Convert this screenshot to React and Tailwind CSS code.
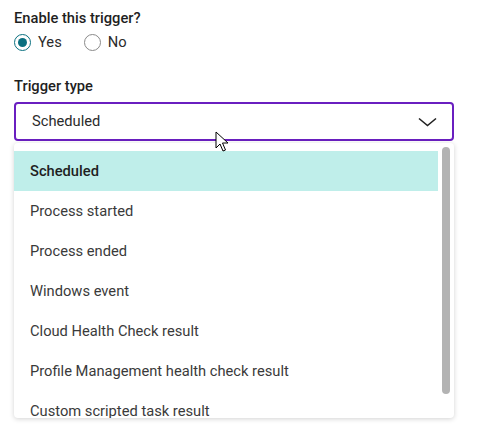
import { useState } from 'react'

const options = [
  'Scheduled',
  'Process started',
  'Process ended',
  'Windows event',
  'Cloud Health Check result',
  'Profile Management health check result',
  'Custom scripted task result',
]

function Radio({ checked, label }) {
  return (
    <label className="flex items-center gap-[7px]">
      <span
        className={
          checked
            ? 'w-[17px] h-[17px] rounded-full border-[1.5px] border-[#0a7080] flex items-center justify-center'
            : 'w-[17px] h-[17px] rounded-full border border-[#8a8a8a]'
        }
      >
        {checked && <span className="w-[9px] h-[9px] rounded-full bg-[#0a7080]" />}
      </span>
      <span className="text-[14.7px] text-[#2b2b2b]">{label}</span>
    </label>
  )
}

export default function App() {
  const [selected] = useState('Scheduled')

  return (
    <div
      className="relative w-[478px] h-[437px] bg-white overflow-hidden px-[14px] pt-[8px]"
      style={{ fontFamily: 'Roboto, "Liberation Sans", sans-serif' }}
    >
      <div className="text-[14.7px] leading-[20px] font-medium text-[#1f1f1f]">Enable this trigger?</div>
      <div className="flex items-center gap-[22px] mt-[5px] h-[18px]">
        <Radio checked label="Yes" />
        <Radio label="No" />
      </div>

      <div className="mt-[25px] text-[14.7px] leading-[20px] font-medium text-[#1f1f1f]">Trigger type</div>
      <div className="mt-[6px] w-[440px] h-[39px] border-2 border-[#6a1fc0] rounded-[4px] flex items-center justify-between pl-[16px] pr-[15px]">
        <span className="text-[14.7px] text-[#2b2b2b]">{selected}</span>
        <svg width="19" height="10" viewBox="0 0 19 10" fill="none">
          <path d="M1 1.5 L9.5 8.5 L18 1.5" stroke="#222" strokeWidth="1.6" />
        </svg>
      </div>

      <div className="mt-[2px] w-[440px] h-[275px] bg-white rounded-[4px] shadow-[0_1px_5px_rgba(0,0,0,0.18)] flex overflow-hidden">
        <ul className="flex-1 pt-[8px]">
          {options.map((o) => (
            <li
              key={o}
              className={
                o === selected
                  ? 'h-[40px] flex items-center pl-[16px] bg-[#bfeeea] text-[14.7px] font-medium text-[#1f1f1f]'
                  : 'h-[40px] flex items-center pl-[16px] text-[14.7px] text-[#3a3a3a]'
              }
            >
              {o}
            </li>
          ))}
        </ul>
        <div className="w-[16px] pt-[4px] flex justify-center">
          <div className="w-[8px] h-[247px] rounded-full bg-[#b3b3b3]" />
        </div>
      </div>

      <svg
        className="absolute left-[215px] top-[131px]"
        width="16"
        height="22"
        viewBox="0 0 16 22"
      >
        <path
          d="M1 1 L1 17 L5 13 L8 20 L10.5 19 L7.5 12 L13 12 Z"
          fill="#fff"
          stroke="#000"
          strokeWidth="1"
          strokeLinejoin="round"
        />
      </svg>
    </div>
  )
}
